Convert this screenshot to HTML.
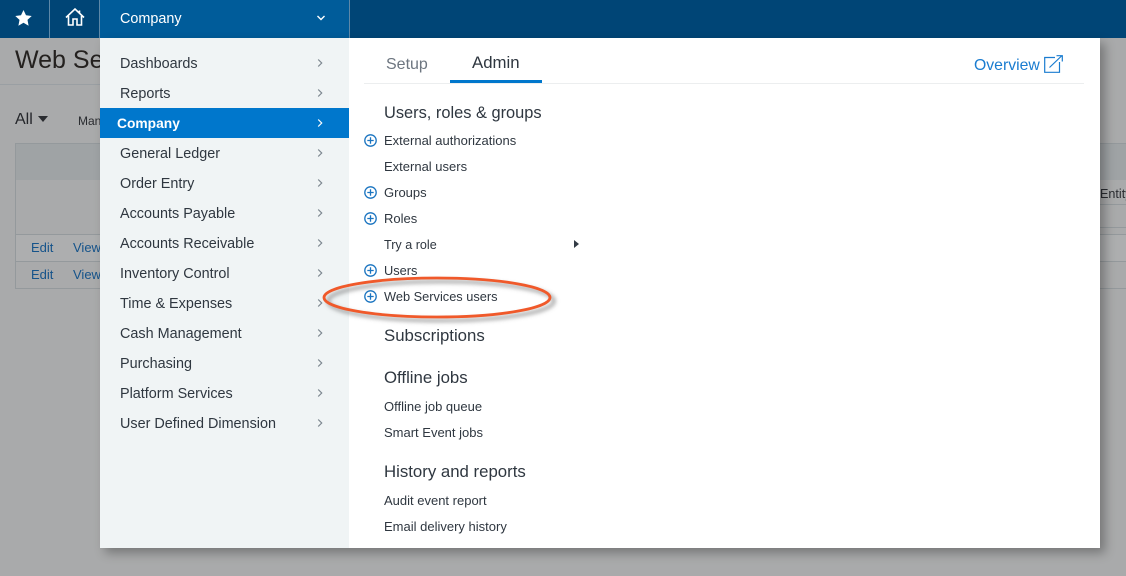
<!DOCTYPE html>
<html><head><meta charset="utf-8"><style>
html,body{margin:0;padding:0}
body{width:1126px;height:576px;overflow:hidden;position:relative;background:#a9aaab;font-family:"Liberation Sans",sans-serif;color:#333}
.a{position:absolute;white-space:nowrap}
.m{position:absolute;left:120px;font-size:14.4px;line-height:30px;color:#2f3740;white-space:nowrap;margin-top:1px}
.c{position:absolute;left:317px;width:6px;height:10px}
.t{position:absolute;left:384px;font-size:13px;line-height:16px;color:#2f3740;white-space:nowrap}
.h{position:absolute;left:384px;font-size:16.8px;line-height:20px;color:#2f3740;white-space:nowrap}
.p{position:absolute;left:364px;width:13px;height:13px}
.l{position:absolute;height:1px;background:#94999c}
</style></head><body>
<svg width="0" height="0" style="position:absolute"><defs>
<symbol id="ch" viewBox="0 0 6 10"><path d="M1.200 1.500l3.500 3.500-3.500 3.500" fill="none" stroke="currentColor" stroke-width="1.200"/></symbol>
<symbol id="pl" viewBox="0 0 13 13"><circle cx="6.500" cy="6.500" r="5.700" fill="none" stroke="#1a74c0" stroke-width="1.300"/><path d="M3.300 6.500h6.400M6.500 3.300v6.400" stroke="#1a74c0" stroke-width="1.300"/></symbol>
</defs></svg>

<!-- background page -->
<div class="a" style="left:15px;top:45px;font-size:25px;line-height:30px;color:#24211f">Web Services users</div>
<div class="l" style="left:0;top:84px;width:100px;background:#9a9fa3"></div>
<div class="a" style="left:15px;top:110px;font-size:16px;line-height:20px;color:#24262a">All</div>
<svg class="a" style="left:38px;top:116px" width="10" height="6"><path d="M0 0h10L5 6z" fill="#2a2c30"/></svg>
<div class="a" style="left:78px;top:113px;font-size:12px;line-height:16px;color:#2a2c30">Manage</div>
<div class="a" style="left:16px;top:144px;width:1110px;height:36px;background:#9fa3a5"></div>
<div class="l" style="left:15px;top:143px;width:1111px"></div>
<div class="a" style="left:15px;top:143px;width:1px;height:146px;background:#94999c"></div>
<div class="l" style="left:15px;top:234px;width:1111px"></div>
<div class="l" style="left:15px;top:261px;width:1111px"></div>
<div class="l" style="left:15px;top:288px;width:1111px"></div>
<div class="l" style="left:1100px;top:204px;width:26px"></div>
<div class="l" style="left:1100px;top:227px;width:26px"></div>
<div class="a" style="left:16px;top:235px;width:1110px;height:26px;background:#adaeaf"></div>
<div class="a" style="left:31px;top:240px;font-size:13px;line-height:16px;color:#15538a">Edit</div>
<div class="a" style="left:73px;top:240px;font-size:13px;line-height:16px;color:#15538a">View</div>
<div class="a" style="left:31px;top:267px;font-size:13px;line-height:16px;color:#15538a">Edit</div>
<div class="a" style="left:73px;top:267px;font-size:13px;line-height:16px;color:#15538a">View</div>
<div class="a" style="left:1100px;top:186px;font-size:12.600px;line-height:16px;color:#2a2c30">Entity</div>

<!-- top bar -->
<div class="a" style="left:0;top:0;width:1126px;height:38px;background:#004576"></div>
<div class="a" style="left:49px;top:0;width:1px;height:38px;background:#5d88a8"></div>
<div class="a" style="left:99px;top:0;width:1px;height:38px;background:#5d88a8"></div>
<div class="a" style="left:100px;top:0;width:249px;height:38px;background:#005c9a"></div>
<div class="a" style="left:349px;top:0;width:1px;height:38px;background:#5d88a8"></div>
<svg class="a" style="left:15px;top:10px" width="17" height="16" viewBox="0 0 17 16"><path d="M8.500 0l2.500 5.300 5.700.7-4.200 3.900 1.100 5.800-5.100-2.900-5.100 2.900 1.100-5.800L.3 6l5.700-.7z" fill="#fff"/></svg>
<svg class="a" style="left:65px;top:8px" width="20" height="18" viewBox="0 0 20 18"><path d="M1 9.500L10 1l9 8.500M3.500 8v9h4.500v-6h4v6h4.500V8M14.500 2.500v3" fill="none" stroke="#fff" stroke-width="1.600"/></svg>
<div class="a" style="left:120px;top:11px;font-size:14.400px;line-height:17px;color:#fff">Company</div>
<svg class="a" style="left:316px;top:15px" width="10" height="6" viewBox="0 0 10 6"><path d="M1.500 1L5 4.500 8.500 1" fill="none" stroke="#fff" stroke-width="1.400"/></svg>

<!-- panel -->
<div class="a" style="left:100px;top:38px;width:1000px;height:510px;background:#fff;box-shadow:5px 5px 10px rgba(0,0,0,.3)"></div>
<div class="a" style="left:100px;top:38px;width:249px;height:510px;background:#f0f4f5"></div>
<div class="a" style="left:100px;top:108px;width:249px;height:30px;background:#0077cc"></div>

<div class="m" style="top:48px">Dashboards</div>
<div class="m" style="top:78px">Reports</div>
<div class="m" style="top:108px;left:117px;color:#fff;font-weight:bold;font-size:13.800px">Company</div>
<div class="m" style="top:138px">General Ledger</div>
<div class="m" style="top:168px">Order Entry</div>
<div class="m" style="top:198px">Accounts Payable</div>
<div class="m" style="top:228px">Accounts Receivable</div>
<div class="m" style="top:258px">Inventory Control</div>
<div class="m" style="top:288px">Time &amp; Expenses</div>
<div class="m" style="top:318px">Cash Management</div>
<div class="m" style="top:348px">Purchasing</div>
<div class="m" style="top:378px">Platform Services</div>
<div class="m" style="top:408px">User Defined Dimension</div>

<svg class="c" style="top:58px;color:#7d8790"><use href="#ch"/></svg>
<svg class="c" style="top:88px;color:#7d8790"><use href="#ch"/></svg>
<svg class="c" style="top:118px;color:#fff"><use href="#ch"/></svg>
<svg class="c" style="top:148px;color:#7d8790"><use href="#ch"/></svg>
<svg class="c" style="top:178px;color:#7d8790"><use href="#ch"/></svg>
<svg class="c" style="top:208px;color:#7d8790"><use href="#ch"/></svg>
<svg class="c" style="top:238px;color:#7d8790"><use href="#ch"/></svg>
<svg class="c" style="top:268px;color:#7d8790"><use href="#ch"/></svg>
<svg class="c" style="top:298px;color:#7d8790"><use href="#ch"/></svg>
<svg class="c" style="top:328px;color:#7d8790"><use href="#ch"/></svg>
<svg class="c" style="top:358px;color:#7d8790"><use href="#ch"/></svg>
<svg class="c" style="top:388px;color:#7d8790"><use href="#ch"/></svg>
<svg class="c" style="top:418px;color:#7d8790"><use href="#ch"/></svg>

<!-- tabs -->
<div class="a" style="left:386px;top:55px;font-size:16px;line-height:20px;color:#6d7680">Setup</div>
<div class="a" style="left:472px;top:53px;font-size:16.800px;line-height:20px;color:#2f3740">Admin</div>
<div class="a" style="left:364px;top:83px;width:720px;height:1px;background:#eceeef"></div>
<div class="a" style="left:450px;top:80px;width:92px;height:3px;background:#0077cc"></div>
<div class="a" style="left:974px;top:56px;font-size:15.800px;line-height:20px;color:#1a7cd0">Overview</div>
<svg class="a" style="left:1044px;top:55px" width="19" height="18" viewBox="0 0 19 18"><path d="M11 2.500H.7v14.800h14.800V7M5.500 12.500L17.500 1M12.500.7h5.800v5.800" fill="none" stroke="#1a7cd0" stroke-width="1.200"/></svg>

<!-- right column -->
<div class="h" style="top:103px;font-size:16.400px">Users, roles &amp; groups</div>
<div class="t" style="top:133px">External authorizations</div>
<div class="t" style="top:159px">External users</div>
<div class="t" style="top:185px">Groups</div>
<div class="t" style="top:211px">Roles</div>
<div class="t" style="top:237px;font-size:12.600px">Try a role</div>
<svg class="a" style="left:574px;top:240px" width="5" height="8"><path d="M0 0l5 4-5 4z" fill="#333b45"/></svg>
<div class="t" style="top:263px;font-size:12.800px">Users</div>
<div class="t" style="top:289px;font-size:12.800px">Web Services users</div>
<div class="h" style="top:326px">Subscriptions</div>
<div class="h" style="top:368px">Offline jobs</div>
<div class="t" style="top:399px">Offline job queue</div>
<div class="t" style="top:425px">Smart Event jobs</div>
<div class="h" style="top:462px">History and reports</div>
<div class="t" style="top:493px">Audit event report</div>
<div class="t" style="top:519px">Email delivery history</div>

<svg class="p" style="top:134px"><use href="#pl"/></svg>
<svg class="p" style="top:186px"><use href="#pl"/></svg>
<svg class="p" style="top:212px"><use href="#pl"/></svg>
<svg class="p" style="top:264px"><use href="#pl"/></svg>
<svg class="p" style="top:290px"><use href="#pl"/></svg>

<!-- annotation ellipse -->
<svg class="a" style="left:315px;top:268px" width="250" height="62" viewBox="0 0 250 62">
<defs><filter id="b" x="-10%" y="-30%" width="120%" height="160%"><feGaussianBlur stdDeviation="2"/></filter></defs>
<ellipse cx="126" cy="33" rx="113" ry="19.500" fill="none" stroke="#6d6d6d" stroke-opacity=".7" stroke-width="3" filter="url(#b)"/>
<ellipse cx="122" cy="29.500" rx="113" ry="19.500" fill="none" stroke="#f0592a" stroke-width="2.800"/>
</svg>
</body></html>
